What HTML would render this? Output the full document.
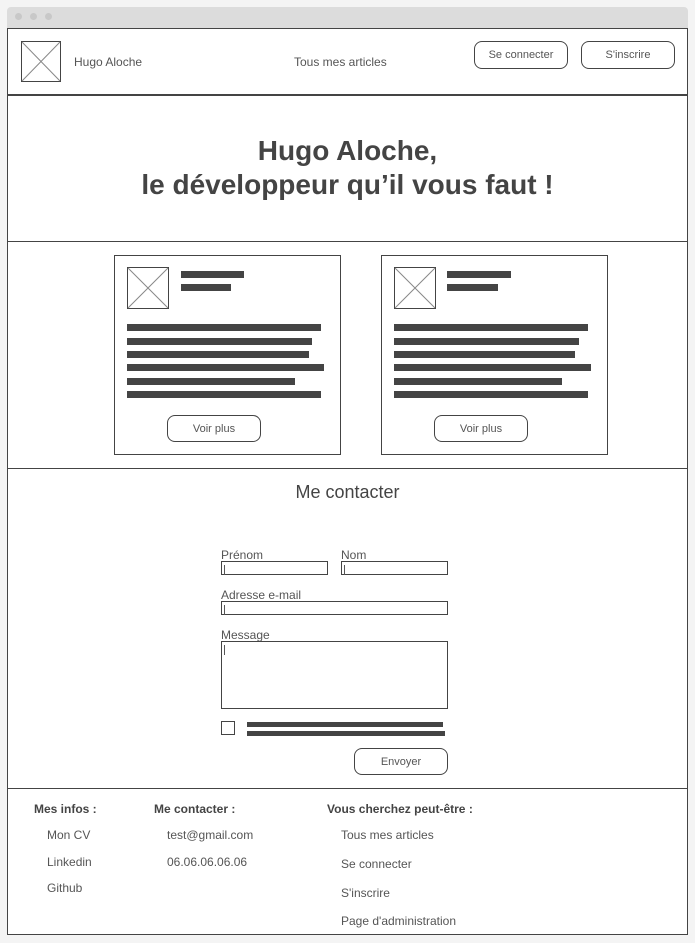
<!DOCTYPE html>
<html><head><meta charset="utf-8"><style>
*{margin:0;padding:0;box-sizing:border-box}
body{width:695px;height:943px;background:#f4f4f4;position:relative;font-family:"Liberation Sans",sans-serif;color:#444;overflow:hidden}
.a{position:absolute}
.bar{position:absolute;background:#444;height:7px}
.btn{position:absolute;border:1px solid #444;border-radius:8px;background:#fff;font-size:11px;color:#555;display:flex;align-items:center;justify-content:center}
.img{position:absolute;border:1px solid #444;background:#fff}
.t{position:absolute;white-space:nowrap}
.in{position:absolute;border:1px solid #444;background:#fff}
.in::before{content:"";position:absolute;left:2px;top:3px;width:1px;height:10px;background:#555}
</style></head><body>
<div class="a" style="left:7px;top:7px;width:681px;height:22px;background:#dcdcdc;border-radius:4px 4px 0 0"></div>
<div class="a" style="left:15px;top:13px;width:7px;height:7px;border-radius:50%;background:#c8c8c8"></div>
<div class="a" style="left:30px;top:13px;width:7px;height:7px;border-radius:50%;background:#c8c8c8"></div>
<div class="a" style="left:45px;top:13px;width:7px;height:7px;border-radius:50%;background:#c8c8c8"></div>
<div class="a" style="left:7px;top:28px;width:681px;height:907px;background:#fff;border:1px solid #444"></div>
<div class="a" style="left:7px;top:94px;width:681px;height:2px;background:#444"></div>
<div class="a" style="left:7px;top:241px;width:681px;height:1px;background:#444"></div>
<div class="a" style="left:7px;top:468px;width:681px;height:1px;background:#444"></div>
<div class="a" style="left:7px;top:788px;width:681px;height:1px;background:#444"></div>

<svg class="a" style="left:21px;top:41px" width="40" height="41"><rect x="0.5" y="0.5" width="39" height="40" fill="#fff" stroke="#444"/><path d="M1 1L39 40M39 1L1 40" stroke="#888" stroke-width="1"/></svg>
<div class="t" style="left:74px;top:55px;font-size:12px;color:#555">Hugo Aloche</div>
<div class="t" style="left:294px;top:55px;font-size:12px;color:#555">Tous mes articles</div>
<div class="btn" style="left:474px;top:41px;width:94px;height:28px">Se connecter</div>
<div class="btn" style="left:581px;top:41px;width:94px;height:28px">S'inscrire</div>

<div class="t" style="left:0;width:695px;top:134px;text-align:center;font-size:28px;font-weight:bold;line-height:34px;color:#444">Hugo Aloche,<br>le développeur qu’il vous faut !</div>

<div class="a" style="left:114px;top:255px;width:227px;height:200px;border:1px solid #444"></div>
<svg class="a" style="left:127px;top:267px" width="42" height="42"><rect x="0.5" y="0.5" width="41" height="41" fill="#fff" stroke="#444"/><path d="M1 1L41 41M41 1L1 41" stroke="#888"/></svg>
<div class="bar" style="left:181px;top:271px;width:63px"></div>
<div class="bar" style="left:181px;top:284px;width:50px"></div>
<div class="bar" style="left:127px;top:324px;width:194px"></div>
<div class="bar" style="left:127px;top:338px;width:185px"></div>
<div class="bar" style="left:127px;top:351px;width:182px"></div>
<div class="bar" style="left:127px;top:364px;width:197px"></div>
<div class="bar" style="left:127px;top:378px;width:168px"></div>
<div class="bar" style="left:127px;top:391px;width:194px"></div>
<div class="btn" style="left:167px;top:415px;width:94px;height:27px">Voir plus</div>

<div class="a" style="left:381px;top:255px;width:227px;height:200px;border:1px solid #444"></div>
<svg class="a" style="left:394px;top:267px" width="42" height="42"><rect x="0.5" y="0.5" width="41" height="41" fill="#fff" stroke="#444"/><path d="M1 1L41 41M41 1L1 41" stroke="#888"/></svg>
<div class="bar" style="left:447px;top:271px;width:64px"></div>
<div class="bar" style="left:447px;top:284px;width:51px"></div>
<div class="bar" style="left:394px;top:324px;width:194px"></div>
<div class="bar" style="left:394px;top:338px;width:185px"></div>
<div class="bar" style="left:394px;top:351px;width:181px"></div>
<div class="bar" style="left:394px;top:364px;width:197px"></div>
<div class="bar" style="left:394px;top:378px;width:168px"></div>
<div class="bar" style="left:394px;top:391px;width:194px"></div>
<div class="btn" style="left:434px;top:415px;width:94px;height:27px">Voir plus</div>

<div class="t" style="left:0;width:695px;top:482px;text-align:center;font-size:18px;color:#444">Me contacter</div>
<div class="t" style="left:221px;top:548px;font-size:12px;color:#555">Prénom</div>
<div class="t" style="left:341px;top:548px;font-size:12px;color:#555">Nom</div>
<div class="in" style="left:221px;top:561px;width:107px;height:14px"></div>
<div class="in" style="left:341px;top:561px;width:107px;height:14px"></div>
<div class="t" style="left:221px;top:588px;font-size:12px;color:#555">Adresse e-mail</div>
<div class="in" style="left:221px;top:601px;width:227px;height:14px"></div>
<div class="t" style="left:221px;top:628px;font-size:12px;color:#555">Message</div>
<div class="in" style="left:221px;top:641px;width:227px;height:68px"></div>
<div class="a" style="left:221px;top:721px;width:14px;height:14px;border:1px solid #444"></div>
<div class="bar" style="left:247px;top:722px;width:196px;height:5px"></div>
<div class="bar" style="left:247px;top:731px;width:198px;height:5px"></div>
<div class="btn" style="left:354px;top:748px;width:94px;height:27px">Envoyer</div>

<div class="t" style="left:34px;top:802px;font-size:12px;font-weight:bold;color:#444">Mes infos :</div>
<div class="t" style="left:154px;top:802px;font-size:12px;font-weight:bold;color:#444">Me contacter :</div>
<div class="t" style="left:327px;top:802px;font-size:12px;font-weight:bold;color:#444">Vous cherchez peut-être :</div>
<div class="t" style="left:47px;top:828px;font-size:12px;color:#555">Mon CV</div>
<div class="t" style="left:47px;top:855px;font-size:12px;color:#555">Linkedin</div>
<div class="t" style="left:47px;top:881px;font-size:12px;color:#555">Github</div>
<div class="t" style="left:167px;top:828px;font-size:12px;color:#555">test@gmail.com</div>
<div class="t" style="left:167px;top:855px;font-size:12px;color:#555">06.06.06.06.06</div>
<div class="t" style="left:341px;top:828px;font-size:12px;color:#555">Tous mes articles</div>
<div class="t" style="left:341px;top:857px;font-size:12px;color:#555">Se connecter</div>
<div class="t" style="left:341px;top:886px;font-size:12px;color:#555">S'inscrire</div>
<div class="t" style="left:341px;top:914px;font-size:12px;color:#555">Page d'administration</div>
</body></html>
